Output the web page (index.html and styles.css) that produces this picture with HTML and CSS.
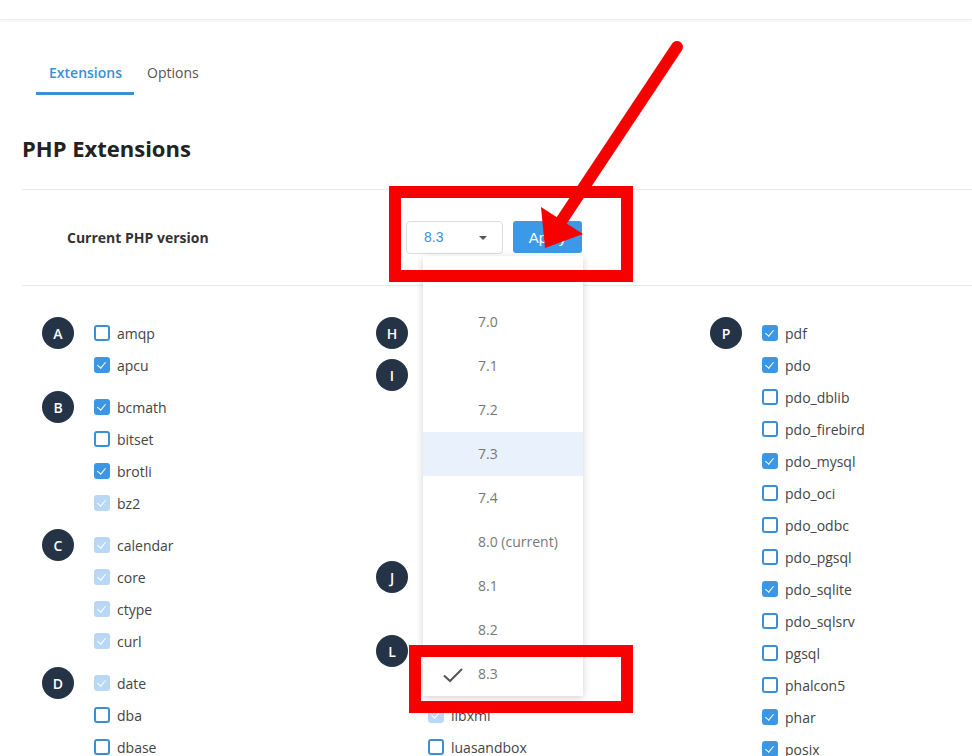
FILE: index.html
```html
<!DOCTYPE html>
<html lang="en">
<head>
<meta charset="utf-8">
<title>PHP Extensions</title>
<link rel="stylesheet" href="styles.css">
</head>
<body>
<div class="screen">
  <div class="topbar"></div>
  <div class="page">
    <nav class="tabs">
      <span class="tab active">Extensions</span>
      <span class="tab">Options</span>
    </nav>
    <h1 class="title">PHP Extensions</h1>
    <div class="version-row">
      <span class="version-label">Current PHP version</span>
      <div class="version-controls">
        <div class="select">
          <span class="select-value">8.3</span>
          <span class="caret"></span>
          <ul class="dropdown">
            <li class="opt blank"></li>
            <li class="opt">7.0</li>
            <li class="opt">7.1</li>
            <li class="opt">7.2</li>
            <li class="opt hover">7.3</li>
            <li class="opt">7.4</li>
            <li class="opt">8.0 (current)</li>
            <li class="opt">8.1</li>
            <li class="opt">8.2</li>
            <li class="opt selected"><svg class="tick" width="22" height="16" viewBox="0 0 22 16"><path d="M2 8.5 L8 14 L20 2" fill="none" stroke="#555" stroke-width="2"/></svg>8.3</li>
          </ul>
        </div>
        <button class="apply">Apply</button>
      </div>
    </div>
    <div class="columns">
      <div class="col">
        <div class="group"><span class="letter">A</span><ul class="items">
          <li><span class="cb"></span>amqp</li>
          <li><span class="cb on"></span>apcu</li>
        </ul></div>
        <div class="group"><span class="letter">B</span><ul class="items">
          <li><span class="cb on"></span>bcmath</li>
          <li><span class="cb"></span>bitset</li>
          <li><span class="cb on"></span>brotli</li>
          <li><span class="cb dis"></span>bz2</li>
        </ul></div>
        <div class="group"><span class="letter">C</span><ul class="items">
          <li><span class="cb dis"></span>calendar</li>
          <li><span class="cb dis"></span>core</li>
          <li><span class="cb dis"></span>ctype</li>
          <li><span class="cb dis"></span>curl</li>
        </ul></div>
        <div class="group"><span class="letter">D</span><ul class="items">
          <li><span class="cb dis"></span>date</li>
          <li><span class="cb"></span>dba</li>
          <li><span class="cb"></span>dbase</li>
          <li><span class="cb on"></span>dom</li>
        </ul></div>
      </div>
      <div class="col">
        <div class="group"><span class="letter">H</span><ul class="items">
          <li><span class="cb"></span>http</li>
        </ul></div>
        <div class="group"><span class="letter">I</span><ul class="items">
          <li><span class="cb on"></span>igbinary</li>
          <li><span class="cb"></span>imagick</li>
          <li><span class="cb on"></span>imap</li>
          <li><span class="cb"></span>inotify</li>
          <li><span class="cb on"></span>intl</li>
          <li><span class="cb"></span>ioncube_loader</li>
        </ul></div>
        <div class="group"><span class="letter">J</span><ul class="items">
          <li><span class="cb"></span>jsmin</li>
          <li><span class="cb dis"></span>json</li>
        </ul></div>
        <div class="group"><span class="letter">L</span><ul class="items">
          <li><span class="cb"></span>ldap</li>
          <li><span class="cb"></span>leveldb</li>
          <li><span class="cb dis"></span>libxml</li>
          <li><span class="cb"></span>luasandbox</li>
        </ul></div>
      </div>
      <div class="col">
        <div class="group"><span class="letter">P</span><ul class="items">
          <li><span class="cb on"></span>pdf</li>
          <li><span class="cb on"></span>pdo</li>
          <li><span class="cb"></span>pdo_dblib</li>
          <li><span class="cb"></span>pdo_firebird</li>
          <li><span class="cb on"></span>pdo_mysql</li>
          <li><span class="cb"></span>pdo_oci</li>
          <li><span class="cb"></span>pdo_odbc</li>
          <li><span class="cb"></span>pdo_pgsql</li>
          <li><span class="cb on"></span>pdo_sqlite</li>
          <li><span class="cb"></span>pdo_sqlsrv</li>
          <li><span class="cb"></span>pgsql</li>
          <li><span class="cb"></span>phalcon5</li>
          <li><span class="cb on"></span>phar</li>
          <li><span class="cb on"></span>posix</li>
        </ul></div>
      </div>
    </div>
  </div>
  <svg class="annotations" width="972" height="756" viewBox="0 0 972 756">
    <rect x="395" y="192" width="232" height="84" fill="none" stroke="#f60000" stroke-width="12"/>
    <rect x="415" y="651" width="212" height="56" fill="none" stroke="#f60000" stroke-width="12"/>
    <line x1="677" y1="47" x2="558" y2="226" stroke="#f60000" stroke-width="12" stroke-linecap="round"/>
    <polygon points="541,207 583,234 545,248" fill="#f60000"/>
  </svg>
</div>
</body>
</html>
```
FILE: styles.css
```css
* { box-sizing: border-box; }
html, body { margin: 0; padding: 0; background: #fff; }
body {
  font-family: "Open Sans", "Liberation Sans", sans-serif;
  color: #444;
  font-size: 14px;
}
.screen {
  position: relative;
  width: 972px;
  height: 756px;
  overflow: hidden;
}
.topbar {
  height: 20px;
  border-bottom: 1px solid #eeeeee;
  box-shadow: 0 1px 3px rgba(0, 0, 0, 0.06);
}
.page {
  padding-left: 22px;
}
.tabs {
  display: flex;
  padding-left: 14px;
  margin-top: 43px;
}
.tab {
  padding: 0 12px 9px 13px;
  line-height: 20px;
  font-size: 14px;
  color: #555;
  border-bottom: 3px solid transparent;
}
.tab.active {
  color: #3a8fd6;
  font-weight: 600;
  border-bottom-color: #3a8fd6;
}
.title {
  margin: 38px 0 0 0;
  font-size: 22px;
  line-height: 30px;
  font-weight: 700;
  color: #222;
  height: 56px;
}
.version-row {
  display: flex;
  align-items: center;
  height: 97px;
  border-top: 1px solid #e8e8e8;
  border-bottom: 1px solid #e8e8e8;
}
.version-label {
  width: 384px;
  padding-left: 45px;
  padding-bottom: 1px;
  font-weight: 700;
  font-size: 14px;
  color: #333;
}
.version-controls {
  display: flex;
  align-items: center;
  gap: 10px;
  margin-top: -1px;
}
.select {
  position: relative;
  width: 97px;
  height: 33px;
  border: 1px solid #dcdcdc;
  border-radius: 4px;
  display: flex;
  align-items: center;
  padding-left: 17px;
}
.select-value {
  font-family: "Liberation Sans", Arial, sans-serif;
  font-size: 14px;
  color: #3f8fd2;
}
.caret {
  position: absolute;
  left: 72px;
  top: 14px;
  width: 0;
  height: 0;
  border-left: 4px solid transparent;
  border-right: 4px solid transparent;
  border-top: 4px solid #555;
}
.dropdown {
  position: absolute;
  left: 16px;
  top: 34px;
  width: 160px;
  margin: 0;
  padding: 0;
  list-style: none;
  background: #fff;
  box-shadow: 0 2px 8px rgba(0, 0, 0, 0.18);
  z-index: 5;
}
.opt {
  height: 44px;
  display: flex;
  align-items: center;
  padding-left: 55px;
  color: #777;
  font-size: 14px;
  position: relative;
}
.opt.hover { background: #e9f2fc; }
.tick {
  position: absolute;
  left: 19px;
  top: 15px;
}
.apply {
  width: 69px;
  height: 32px;
  border: none;
  border-radius: 3px;
  background: #3b99e8;
  color: #fff;
  font-family: "Liberation Sans", Arial, sans-serif;
  font-size: 15px;
  padding: 0;
}
.columns {
  display: grid;
  grid-template-columns: 334px 334px 334px;
  padding: 31px 0 0 20px;
}
.group {
  display: flex;
  align-items: flex-start;
  margin-bottom: 10px;
}
.letter {
  flex: none;
  width: 32px;
  height: 32px;
  border-radius: 50%;
  background: #243446;
  color: #fff;
  font-size: 14px;
  font-weight: 600;
  display: flex;
  align-items: center;
  justify-content: center;
}
.items {
  list-style: none;
  margin: 0 0 0 20px;
  padding: 0;
}
.items li {
  height: 32px;
  display: flex;
  align-items: center;
  gap: 7px;
  font-size: 14px;
  color: #444;
  white-space: nowrap;
}
.cb {
  flex: none;
  width: 16px;
  height: 16px;
  border: 2px solid #3d8fd4;
  border-radius: 3px;
  position: relative;
}
.cb.on, .cb.dis {
  border: none;
  background: #3b97e4;
}
.cb.dis { background: #b8d8f6; }
.cb.on::after, .cb.dis::after {
  content: "";
  position: absolute;
  left: 5px;
  top: 3px;
  width: 4px;
  height: 7px;
  border-right: 1.6px solid #fff;
  border-bottom: 1.6px solid #fff;
  transform: rotate(40deg);
}
.annotations {
  position: absolute;
  left: 0;
  top: 0;
  pointer-events: none;
  z-index: 10;
}
```
